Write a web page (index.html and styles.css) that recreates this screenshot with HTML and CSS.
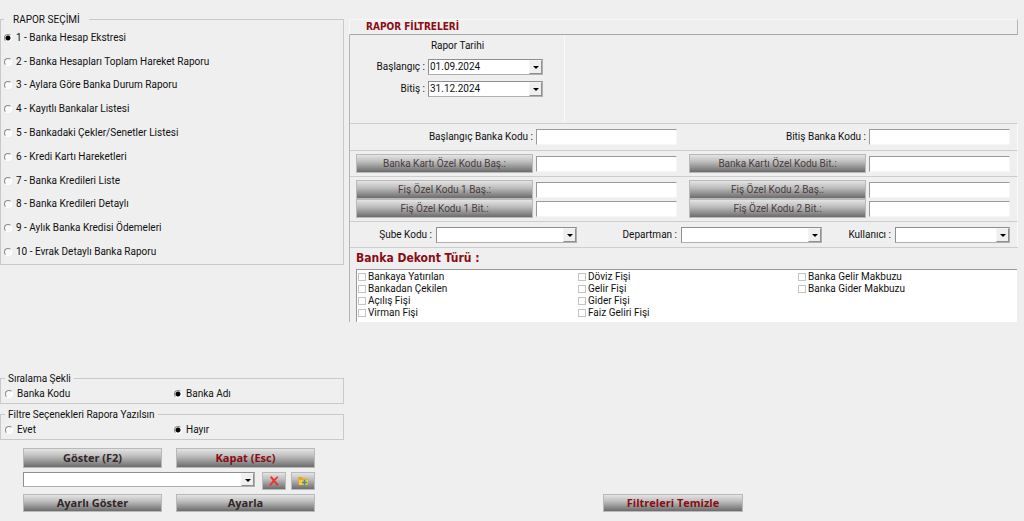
FILE: index.html
```html
<!DOCTYPE html>
<html lang="tr">
<head>
<meta charset="utf-8">
<title>Banka Raporları</title>
<link rel="stylesheet" href="styles.css">
</head>
<body>
<form class="page">
  <div class="side">
    <fieldset class="group">
      <legend class="legend-wide">RAPOR SEÇİMİ</legend>
      <div class="reports">
        <label class="option"><input type="radio" name="rapor" checked>1 - Banka Hesap Ekstresi</label>
        <label class="option"><input type="radio" name="rapor">2 - Banka Hesapları Toplam Hareket Raporu</label>
        <label class="option"><input type="radio" name="rapor">3 - Aylara Göre Banka Durum Raporu</label>
        <label class="option"><input type="radio" name="rapor">4 - Kayıtlı Bankalar Listesi</label>
        <label class="option"><input type="radio" name="rapor">5 - Bankadaki Çekler/Senetler Listesi</label>
        <label class="option"><input type="radio" name="rapor">6 - Kredi Kartı Hareketleri</label>
        <label class="option"><input type="radio" name="rapor">7 - Banka Kredileri Liste</label>
        <label class="option"><input type="radio" name="rapor">8 - Banka Kredileri Detaylı</label>
        <label class="option"><input type="radio" name="rapor">9 - Aylık Banka Kredisi Ödemeleri</label>
        <label class="option"><input type="radio" name="rapor">10 - Evrak Detaylı Banka Raporu</label>
      </div>
    </fieldset>

    <div class="side-bottom">
      <fieldset class="group">
        <legend>Sıralama Şekli</legend>
        <div class="pair">
          <label class="option"><input type="radio" name="sira">Banka Kodu</label>
          <label class="option"><input type="radio" name="sira" checked>Banka Adı</label>
        </div>
      </fieldset>
      <fieldset class="group">
        <legend>Filtre Seçenekleri Rapora Yazılsın</legend>
        <div class="pair">
          <label class="option"><input type="radio" name="filtre">Evet</label>
          <label class="option"><input type="radio" name="filtre" checked>Hayır</label>
        </div>
      </fieldset>
      <div class="actions">
        <div class="action-row tall">
          <button type="button" class="btn">Göster (F2)</button>
          <button type="button" class="btn danger">Kapat (Esc)</button>
        </div>
        <div class="preset-row">
          <span class="combo preset"><select aria-label="Kayıtlı ayar"><option></option></select></span>
          <button type="button" class="btn icon-btn" aria-label="Sil">
            <svg width="12" height="12" viewBox="0 0 12 12"><path d="M2 2.2 3.4 1 6 4.1 9.3 1.2 10.4 2 7.2 5.7 10.8 9.6 9.2 11 6 7.3 2.6 11 1.2 9.8 4.6 5.8Z" fill="#e8382c"/></svg>
          </button>
          <button type="button" class="btn icon-btn" aria-label="Ekle">
            <svg width="12" height="12" viewBox="0 0 12 12"><path d="M1 2h4l1 1.5h4.5V10H1.8Z" fill="#e9a820"/><path d="M2 5h9l-.6 5H2Z" fill="#f8c93c"/><path d="M7.5 5v5M5 7.5h5" stroke="#3c8fa8" stroke-width="1.6"/></svg>
          </button>
        </div>
        <div class="action-row">
          <button type="button" class="btn">Ayarlı Göster</button>
          <button type="button" class="btn">Ayarla</button>
        </div>
      </div>
    </div>
  </div>

  <div class="main">
    <section class="filters">
      <h1 class="filters-title">RAPOR FİLTRELERİ</h1>
      <div class="filters-body">
        <div class="dates">
          <div class="dates-title">Rapor Tarihi</div>
          <div class="date-row">
            <label for="bas">Başlangıç :</label>
            <span class="combo date"><select id="bas"><option>01.09.2024</option></select></span>
          </div>
          <div class="date-row">
            <label for="bit">Bitiş :</label>
            <span class="combo date"><select id="bit"><option>31.12.2024</option></select></span>
          </div>
        </div>

        <div class="band halves">
          <div class="field"><label for="bk1">Başlangıç Banka Kodu :</label><input id="bk1" type="text" class="text"></div>
          <div class="field"><label for="bk2">Bitiş Banka Kodu :</label><input id="bk2" type="text" class="text"></div>
        </div>

        <div class="band halves">
          <div class="field"><button type="button" class="btn pick" id="ok1">Banka Kartı Özel Kodu Baş.:</button><input type="text" class="text" aria-labelledby="ok1"></div>
          <div class="field"><button type="button" class="btn pick" id="ok2">Banka Kartı Özel Kodu Bit.:</button><input type="text" class="text" aria-labelledby="ok2"></div>
        </div>

        <div class="band halves">
          <div class="field"><button type="button" class="btn pick" id="f1a">Fiş Özel Kodu 1 Baş.:</button><input type="text" class="text" aria-labelledby="f1a"></div>
          <div class="field"><button type="button" class="btn pick" id="f2a">Fiş Özel Kodu 2 Baş.:</button><input type="text" class="text" aria-labelledby="f2a"></div>
          <div class="field"><button type="button" class="btn pick" id="f1b">Fiş Özel Kodu 1 Bit.:</button><input type="text" class="text" aria-labelledby="f1b"></div>
          <div class="field"><button type="button" class="btn pick" id="f2b">Fiş Özel Kodu 2 Bit.:</button><input type="text" class="text" aria-labelledby="f2b"></div>
        </div>

        <div class="band thirds">
          <div class="choice"><label for="sube">Şube Kodu :</label><span class="combo wide"><select id="sube"><option></option></select></span></div>
          <div class="choice"><label for="dep">Departman :</label><span class="combo wide"><select id="dep"><option></option></select></span></div>
          <div class="choice"><label for="kul">Kullanıcı :</label><span class="combo date"><select id="kul"><option></option></select></span></div>
        </div>

        <div class="types">
          <h2 class="types-title">Banka Dekont Türü :</h2>
          <div class="types-list">
            <label class="check"><input type="checkbox">Bankaya Yatırılan</label>
            <label class="check"><input type="checkbox">Bankadan Çekilen</label>
            <label class="check"><input type="checkbox">Açılış Fişi</label>
            <label class="check"><input type="checkbox">Virman Fişi</label>
            <label class="check"><input type="checkbox">Döviz Fişi</label>
            <label class="check"><input type="checkbox">Gelir Fişi</label>
            <label class="check"><input type="checkbox">Gider Fişi</label>
            <label class="check"><input type="checkbox">Faiz Geliri Fişi</label>
            <label class="check"><input type="checkbox">Banka Gelir Makbuzu</label>
            <label class="check"><input type="checkbox">Banka Gider Makbuzu</label>
          </div>
        </div>
      </div>
    </section>
    <button type="button" class="btn danger clear">Filtreleri Temizle</button>
  </div>
</form>
</body>
</html>
```
FILE: styles.css
```css
* {
  box-sizing: border-box;
}

body {
  margin: 0;
  background: #efefef;
  color: #101010;
  font: 10px/12px Roboto, Tahoma, sans-serif;
}

button,
input,
select {
  margin: 0;
  font: inherit;
  color: inherit;
}

.page {
  display: grid;
  grid-template-columns: 344px minmax(0, 1fr);
  column-gap: 5px;
  min-height: 100vh;
  padding: 13px 6px 9px 0;
}

.side,
.main {
  display: flex;
  flex-direction: column;
  justify-content: space-between;
}

.main {
  padding-top: 6px;
}

/* Option groups */

.group {
  min-width: 0;
  margin: 0;
  padding: 0;
  border: 1px solid #c9c9c9;
}

.group legend {
  margin-left: 4px;
  padding: 0 3px;
  line-height: 13px;
}

.group .legend-wide {
  margin-left: 3px;
  padding: 0 9px;
}

.reports {
  display: grid;
  grid-template-rows: repeat(10, 1fr);
  min-height: 238px;
  padding-left: 3px;
}

.pair {
  display: grid;
  grid-template-columns: 169px 1fr;
  height: 18px;
  padding-left: 4px;
}

.option {
  display: flex;
  align-items: center;
  gap: 4px;
}

.option input {
  appearance: none;
  width: 8px;
  height: 8px;
  border: 1px solid;
  border-color: #8c8c8c #fff #fff #8c8c8c;
  border-radius: 50%;
  background: #fafafa;
}

.option input:checked {
  background: radial-gradient(circle, #000 0 2px, #fafafa 3px);
}

.side-bottom {
  display: flex;
  flex-direction: column;
  gap: 4px;
}

/* Buttons */

.btn {
  padding: 0;
  border: 1px solid #b9b9b9;
  background: linear-gradient(#e4e4e4, #bdbdbd 40%, #6c6c6c);
  color: #33262a;
  font: bold 11px/14px "Open Sans", "Segoe UI", sans-serif;
  text-align: center;
}

.danger {
  color: #8b0c12;
}

.actions {
  display: grid;
  gap: 4px;
  padding: 4px 29px 0 23px;
}

.action-row {
  display: grid;
  grid-template-columns: 1fr 1fr;
  grid-auto-rows: 18px;
  gap: 14px;
}

.tall {
  grid-auto-rows: 20px;
}

.preset-row {
  display: flex;
  align-items: flex-start;
  gap: 5px;
}

.icon-btn {
  display: flex;
  align-items: center;
  justify-content: center;
  width: 24px;
  height: 18px;
}

.clear {
  width: 140px;
  height: 18px;
  margin-left: 254px;
}

/* Drop-downs */

.combo {
  position: relative;
  display: block;
  height: 16px;
  border: 1px solid;
  border-color: #8f8f8f #b0b0b0 #b0b0b0 #8f8f8f;
  background: #fff;
}

.combo select {
  appearance: none;
  display: block;
  width: 100%;
  height: 100%;
  padding: 0 12px 0 1px;
  border: 0;
  border-radius: 0;
  background: transparent;
}

.combo::before {
  content: "";
  position: absolute;
  top: 0;
  right: 0;
  bottom: 0;
  width: 11px;
  border: 1px solid;
  border-color: #f4f4f4 #8f8f8f #8f8f8f #f4f4f4;
  background: #efefef;
  pointer-events: none;
}

.combo::after {
  content: "";
  position: absolute;
  top: 50%;
  right: 3px;
  margin-top: -1px;
  border: solid transparent;
  border-width: 3px 3px 0;
  border-top-color: #000;
  pointer-events: none;
}

.preset {
  flex: 1;
  height: 15px;
  margin-right: 2px;
}

.wide {
  width: 141px;
}

.date {
  width: 115px;
}

/* Filter panel */

.filters-title {
  margin: 0;
  padding-left: 16px;
  border: 1px solid;
  border-color: #f8f8f8 #b4b4b4 #a6a6a6 #f8f8f8;
  color: #8b0c12;
  font: bold 10px/14px "DejaVu Sans Condensed", Tahoma, sans-serif;
}

.filters-body {
  border-left: 1px solid #b4b4b4;
}

.dates {
  width: 215px;
  height: 88px;
  padding: 5px 21px 0 0;
  border-right: 1px solid #fafafa;
}

.dates-title {
  margin-bottom: 7px;
  padding-left: 22px;
  text-align: center;
}

.date-row {
  display: flex;
  align-items: center;
  justify-content: flex-end;
  gap: 3px;
  margin-bottom: 6px;
}

.band {
  display: grid;
  align-content: center;
  min-height: 26px;
  padding: 3px 7px 3px 6px;
  border-top: 1px solid #cdcdcd;
  border-right: 1px solid #fafafa;
}

.dates + .band {
  min-height: 27px;
}

.halves {
  grid-template-columns: 1fr 1fr;
  column-gap: 12px;
}

.field {
  display: grid;
  grid-template-columns: minmax(0, 177fr) minmax(0, 141fr);
  align-items: center;
  column-gap: 3px;
}

.field label {
  text-align: right;
}

.text {
  width: 100%;
  height: 16px;
  padding: 0 2px;
  border: 1px solid;
  border-color: #9a9a9a #f6f6f6 #f6f6f6 #9a9a9a;
  background: #fff;
}

.pick {
  height: 19px;
  color: #4a3c40;
  font: 10px/14px Roboto, "Segoe UI", sans-serif;
}

.thirds {
  grid-template-columns: 221fr 245fr 188fr;
}

.choice {
  display: flex;
  align-items: center;
  justify-content: flex-end;
  gap: 4px;
}

.types {
  padding: 0 1px 0 6px;
  border-top: 1px solid #cdcdcd;
}

.types-title {
  margin: 0;
  color: #8b0c12;
  font: bold 12px/21px "DejaVu Sans Condensed", Tahoma, sans-serif;
}

.types-list {
  display: grid;
  grid-template-rows: repeat(4, 12px);
  grid-auto-columns: 220px;
  grid-auto-flow: column;
  padding: 1px 0 3px 1px;
  border-top: 1px solid #9a9a9a;
  border-left: 1px solid #9a9a9a;
  background: #fff;
}

.check {
  display: flex;
  align-items: center;
  gap: 2px;
}

.check input {
  appearance: none;
  width: 8px;
  height: 8px;
  border: 1px solid #c4c4c4;
  background: #fff;
}
```
